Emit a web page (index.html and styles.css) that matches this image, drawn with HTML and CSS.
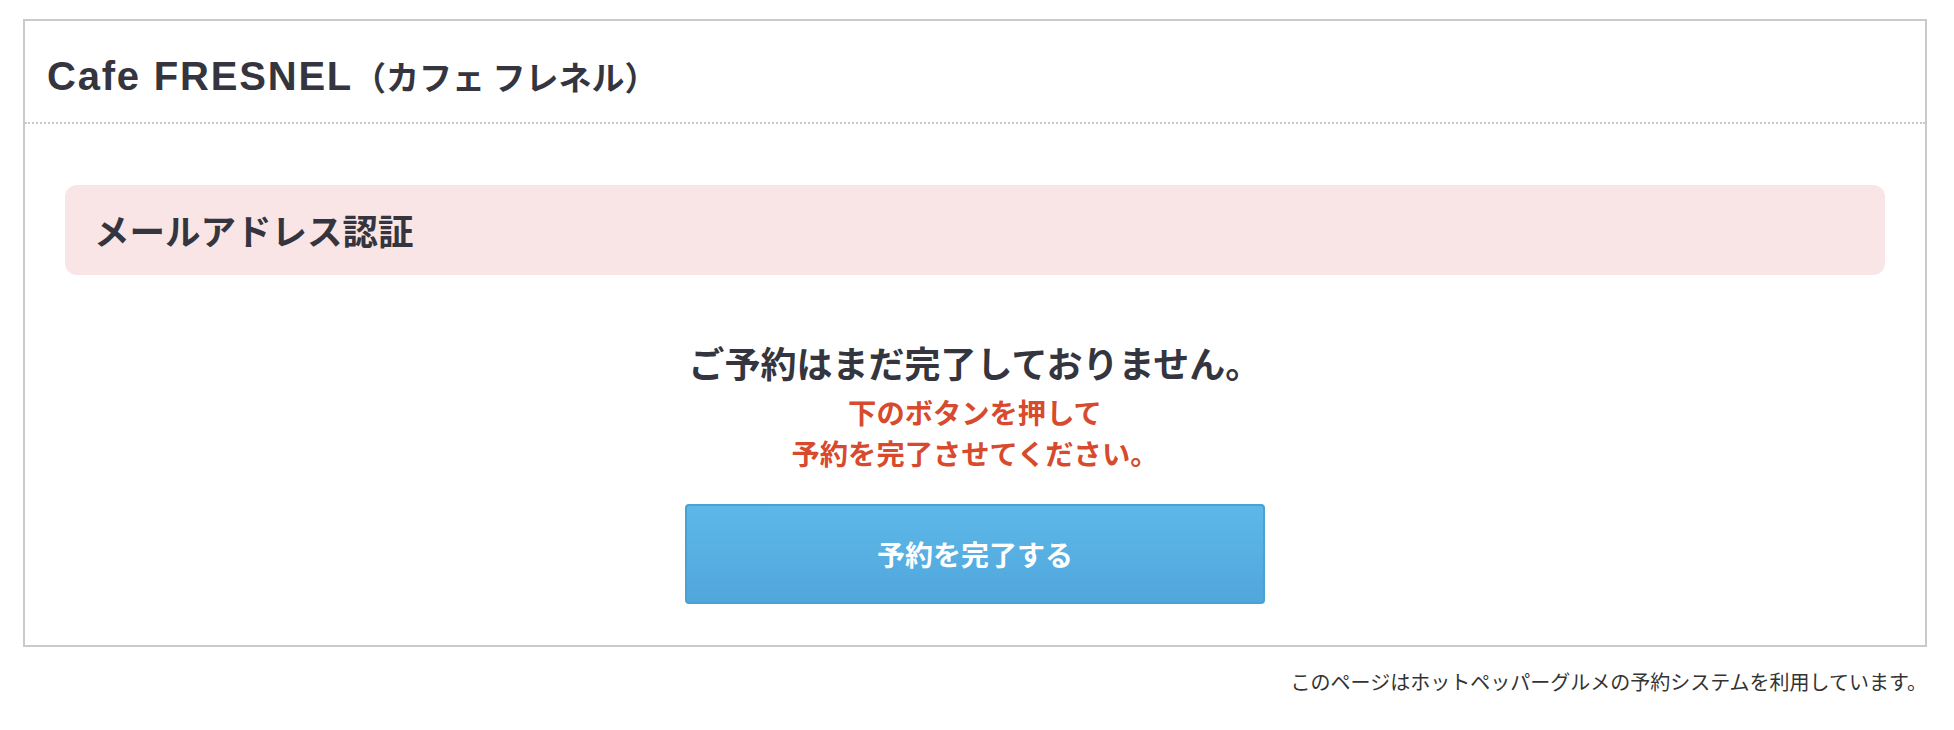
FILE: index.html
```html
<!DOCTYPE html>
<html lang="ja">
<head>
<meta charset="utf-8">
<title>Cafe FRESNEL</title>
<link rel="stylesheet" href="styles.css">
</head>
<body>
<div class="page">
  <div class="card">
    <div class="card-header">
      <h1 class="shop-name"><span class="shop-name-latin">Cafe FRESNEL</span>（カフェ フレネル）</h1>
    </div>
    <div class="card-body">
      <div class="notice">
        <h2 class="notice-title">メールアドレス認証</h2>
      </div>
      <p class="message">ご予約はまだ完了しておりません。</p>
      <p class="sub">下のボタンを押して<br>予約を完了させてください。</p>
      <div class="actions">
        <button class="btn" type="button">予約を完了する</button>
      </div>
    </div>
  </div>
  <p class="footer-note">このページはホットペッパーグルメの予約システムを利用しています。</p>
</div>
</body>
</html>
```

FILE: styles.css
```css
html, body {
  margin: 0;
  padding: 0;
  background: #ffffff;
}

body {
  font-family: "Noto Sans CJK JP", sans-serif;
  color: #34353e;
}

.page {
  padding: 19px 27px 0 23px;
}

.card {
  border: 2px solid #cacaca;
  background: #ffffff;
}

.card-header {
  height: 103px;
  box-sizing: border-box;
  display: flex;
  align-items: center;
  padding: 9px 22px 0;
  border-bottom: 2px dotted #c8c8c8;
}

.shop-name {
  margin: 0;
  font-family: "Noto Sans CJK JP", sans-serif;
  font-size: 33px;
  font-weight: 700;
  line-height: 1.2;
  color: #34353e;
}

.shop-name-latin {
  font-family: "Liberation Sans", sans-serif;
  font-size: 40px;
  letter-spacing: 1.8px;
}

.card-body {
  padding: 61px 40px 41px;
}

.notice {
  height: 90px;
  display: flex;
  align-items: center;
  padding: 0 29px;
  background: #f9e5e5;
  border-radius: 12px;
}

.notice-title {
  margin: 0;
  font-size: 35.5px;
  font-weight: 700;
  line-height: 1.2;
  color: #34353e;
}

.message {
  margin: 63px 0 0;
  text-align: center;
  font-size: 36px;
  font-weight: 700;
  line-height: 48px;
  color: #34353e;
}

.sub {
  margin: 5px 0 0;
  text-align: center;
  font-size: 28.3px;
  font-weight: 700;
  line-height: 41px;
  color: #d84a2d;
}

.actions {
  display: flex;
  justify-content: center;
  margin-top: 31px;
}

.btn {
  width: 580px;
  height: 100px;
  border: 2px solid #48a2d2;
  border-radius: 4px;
  background: linear-gradient(#5db8e8, #51a6dc);
  color: #ffffff;
  font-family: "Noto Sans CJK JP", sans-serif;
  font-size: 28px;
  font-weight: 700;
  cursor: pointer;
}

.footer-note {
  margin: 20px 0 0;
  text-align: right;
  font-size: 20px;
  line-height: 30px;
  color: #333333;
}
```
